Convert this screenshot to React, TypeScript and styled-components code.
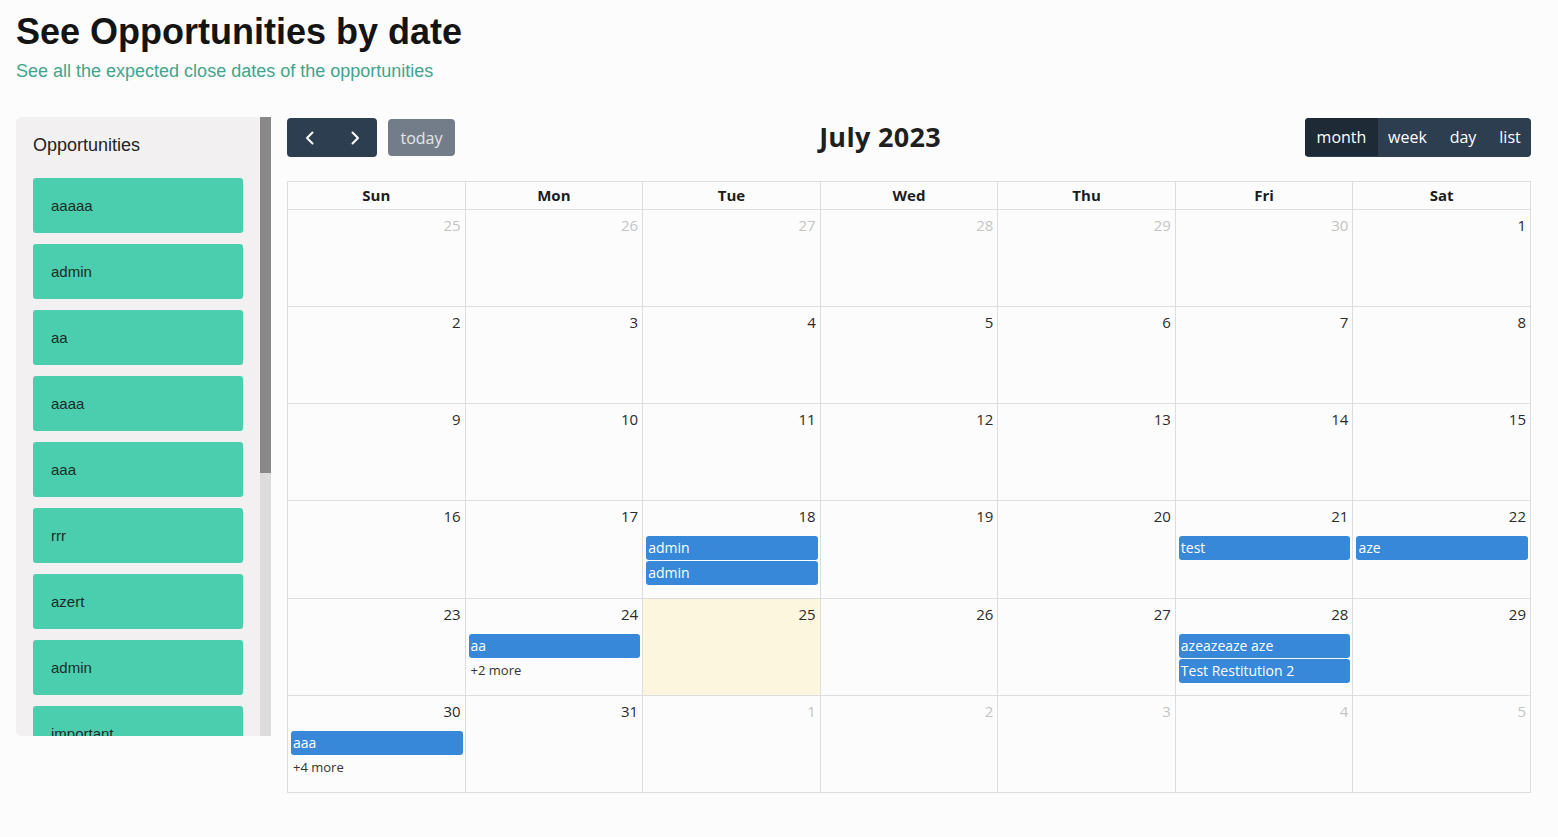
import React from "react";
import styled, { createGlobalStyle } from "styled-components";

const GlobalStyle = createGlobalStyle`
  html, body { margin: 0; padding: 0; background: #fcfcfc; }
  * { box-sizing: border-box; }
`;

const CAL_FONT = `"Open Sans", "Noto Sans", sans-serif`;

const Page = styled.div`
  width: 1558px;
  height: 837px;
  padding: 11px 27px 0 16px;
  font-family: "Liberation Sans", Arial, sans-serif;
  overflow: hidden;
`;

const Title = styled.h1`
  margin: 0;
  font-size: 36px;
  line-height: 41px;
  font-weight: 700;
  color: #141414;
`;

const Subtitle = styled.p`
  margin: 9px 0 0;
  font-size: 18px;
  line-height: 21px;
  color: #3fa58c;
`;

const Main = styled.div`
  display: flex;
  gap: 16px;
  margin-top: 35px;
  align-items: flex-start;
`;

const Sidebar = styled.aside`
  width: 255px;
  height: 619px;
  flex: none;
  display: flex;
  background: #f2f0f0;
  border-radius: 6px 0 0 6px;
  overflow: hidden;
`;

const SideContent = styled.div`
  flex: 1;
  min-width: 0;
  overflow: hidden;
  padding: 18px 17px 36px 17px;
`;

const ScrollTrack = styled.div`
  width: 11px;
  flex: none;
  background: #dcdcdc;
  display: flex;
  flex-direction: column;
`;

const ScrollThumb = styled.div`
  height: 356px;
  background: #888888;
`;

const SideHeading = styled.h2`
  margin: 0 0 22px;
  font-size: 18px;
  line-height: 21px;
  font-weight: 400;
  color: #222;
`;

const CardList = styled.div`
  display: flex;
  flex-direction: column;
  gap: 11px;
`;

const Card = styled.div`
  height: 55px;
  flex: none;
  background: #4bcead;
  border-radius: 3px;
  padding-left: 18px;
  display: flex;
  align-items: center;
  font-size: 15px;
  color: #1f2a2a;
`;

const Calendar = styled.section`
  width: 1244px;
  flex: none;
  margin-top: 1px;
  font-family: ${CAL_FONT};
`;

const Toolbar = styled.div`
  display: flex;
  justify-content: space-between;
  align-items: center;
  height: 39px;
  margin-bottom: 24px;
`;

const ToolGroup = styled.div`
  display: flex;
  align-items: center;
  gap: 11px;
`;

const BtnGroup = styled.div`
  display: flex;
  height: 39px;
  border-radius: 4px;
  overflow: hidden;
  background: #2c3e50;
`;

const NavBtn = styled.button`
  width: 45px;
  height: 39px;
  border: none;
  background: transparent;
  color: #fff;
  display: flex;
  align-items: center;
  justify-content: center;
  padding: 0;
`;

const TodayBtn = styled.button`
  height: 37px;
  width: 67px;
  border: none;
  border-radius: 4px;
  background: #737d89;
  color: #e4e7ea;
  font-family: ${CAL_FONT};
  font-size: 16px;
  padding: 0;
`;

const MonthTitle = styled.h2`
  margin: -3px 0 0;
  font-size: 27px;
  font-weight: 700;
  color: #1f1f1f;
  letter-spacing: 0.3px;
`;

const ViewBtn = styled.button<{ $active?: boolean; $w: number }>`
  height: 38px;
  width: ${(p) => p.$w}px;
  border: none;
  background: ${(p) => (p.$active ? "#1e2b37" : "transparent")};
  color: #fff;
  font-family: ${CAL_FONT};
  font-size: 16px;
  padding: 0;
`;

const Grid = styled.div`
  border-top: 1px solid #dddddd;
  border-left: 1px solid #dddddd;
`;

const HeadRow = styled.div`
  display: grid;
  grid-template-columns: repeat(7, 1fr);
  height: 28px;
`;

const HeadCell = styled.div`
  border-right: 1px solid #dddddd;
  border-bottom: 1px solid #dddddd;
  display: flex;
  align-items: center;
  justify-content: center;
  padding-bottom: 1px;
  font-weight: 700;
  font-size: 15px;
  color: #1c1c1c;
`;

const Body = styled.div`
  display: grid;
  grid-template-columns: repeat(7, 1fr);
  grid-template-rows: repeat(6, 1fr);
  height: 583px;
`;

const DayCell = styled.div<{ $today?: boolean }>`
  border-right: 1px solid #dddddd;
  border-bottom: 1px solid #dddddd;
  background: ${(p) => (p.$today ? "#fcf6de" : "transparent")};
  display: flex;
  flex-direction: column;
  min-width: 0;
`;

const DayNum = styled.div<{ $other?: boolean }>`
  text-align: right;
  padding: 3px 4px 0;
  height: 33px;
  font-size: 15px;
  line-height: 24px;
  color: ${(p) => (p.$other ? "#c4c4c4" : "#2b2b2b")};
`;

const Event = styled.div`
  margin: 2px 2px 0 3px;
  height: 24px;
  background: #3788d8;
  border-radius: 3px;
  color: #fff;
  font-size: 14px;
  line-height: 24px;
  padding-left: 2px;
  white-space: nowrap;
  overflow: hidden;
  & + & { margin-top: 1px; }
`;

const More = styled.div`
  margin: 3px 0 0 5px;
  font-size: 13px;
  line-height: 18px;
  color: #333;
`;

const Chevron = ({ dir }: { dir: "left" | "right" }) => (
  <svg width="14" height="16" viewBox="0 0 14 16" fill="none">
    <path
      d={dir === "left" ? "M9.5 2.5 L4 8 L9.5 13.5" : "M4.5 2.5 L10 8 L4.5 13.5"}
      stroke="#fff"
      strokeWidth="2"
      strokeLinecap="round"
      strokeLinejoin="round"
    />
  </svg>
);

const opportunities = [
  "aaaaa", "admin", "aa", "aaaa", "aaa", "rrr", "azert", "admin", "important",
  "test", "aze", "azeazeaze aze", "Test Restitution 2", "aa", "admin",
];

type Day = { n: number; other?: boolean; today?: boolean; events?: string[]; more?: number };

const days: Day[] = [
  { n: 25, other: true }, { n: 26, other: true }, { n: 27, other: true }, { n: 28, other: true },
  { n: 29, other: true }, { n: 30, other: true }, { n: 1 },
  { n: 2 }, { n: 3 }, { n: 4 }, { n: 5 }, { n: 6 }, { n: 7 }, { n: 8 },
  { n: 9 }, { n: 10 }, { n: 11 }, { n: 12 }, { n: 13 }, { n: 14 }, { n: 15 },
  { n: 16 }, { n: 17 }, { n: 18, events: ["admin", "admin"] }, { n: 19 }, { n: 20 },
  { n: 21, events: ["test"] }, { n: 22, events: ["aze"] },
  { n: 23 }, { n: 24, events: ["aa"], more: 2 }, { n: 25, today: true }, { n: 26 }, { n: 27 },
  { n: 28, events: ["azeazeaze aze", "Test Restitution 2"] }, { n: 29 },
  { n: 30, events: ["aaa"], more: 4 }, { n: 31 }, { n: 1, other: true }, { n: 2, other: true },
  { n: 3, other: true }, { n: 4, other: true }, { n: 5, other: true },
];

const weekdays = ["Sun", "Mon", "Tue", "Wed", "Thu", "Fri", "Sat"];

export default function App() {
  return (
    <>
      <GlobalStyle />
      <Page>
        <Title>See Opportunities by date</Title>
        <Subtitle>See all the expected close dates of the opportunities</Subtitle>
        <Main>
          <Sidebar>
            <SideContent>
              <SideHeading>Opportunities</SideHeading>
              <CardList>
                {opportunities.map((o, i) => (
                  <Card key={i}>{o}</Card>
                ))}
              </CardList>
            </SideContent>
            <ScrollTrack>
              <ScrollThumb />
            </ScrollTrack>
          </Sidebar>
          <Calendar>
            <Toolbar>
              <ToolGroup>
                <BtnGroup>
                  <NavBtn aria-label="prev"><Chevron dir="left" /></NavBtn>
                  <NavBtn aria-label="next"><Chevron dir="right" /></NavBtn>
                </BtnGroup>
                <TodayBtn>today</TodayBtn>
              </ToolGroup>
              <MonthTitle>July 2023</MonthTitle>
              <BtnGroup>
                <ViewBtn $active $w={73}>month</ViewBtn>
                <ViewBtn $w={59}>week</ViewBtn>
                <ViewBtn $w={52}>day</ViewBtn>
                <ViewBtn $w={42}>list</ViewBtn>
              </BtnGroup>
            </Toolbar>
            <Grid>
              <HeadRow>
                {weekdays.map((w) => (
                  <HeadCell key={w}>{w}</HeadCell>
                ))}
              </HeadRow>
              <Body>
                {days.map((d, i) => (
                  <DayCell key={i} $today={d.today}>
                    <DayNum $other={d.other}>{d.n}</DayNum>
                    {d.events?.map((e, j) => (
                      <Event key={j}>{e}</Event>
                    ))}
                    {d.more ? <More>+{d.more} more</More> : null}
                  </DayCell>
                ))}
              </Body>
            </Grid>
          </Calendar>
        </Main>
      </Page>
    </>
  );
}
